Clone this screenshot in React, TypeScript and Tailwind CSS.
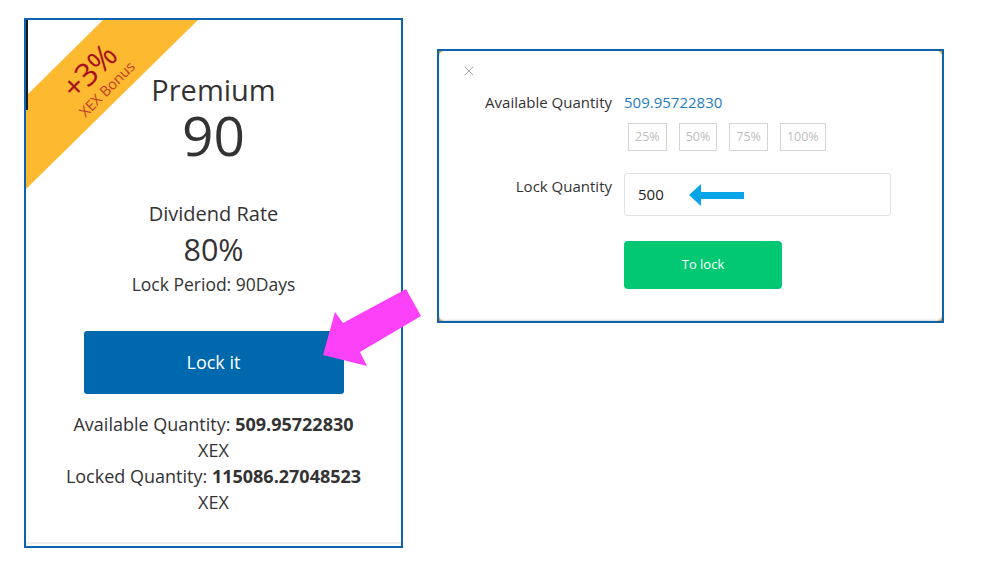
import React from "react";
import { X } from "lucide-react";

function Card() {
  return (
    <div className="relative ml-[24px] mt-[18px] h-[530px] w-[379px] shrink-0 border-2 border-[#0b64ad] bg-white">
      <div className="relative h-full w-full overflow-hidden text-center text-[#333333]">
        {/* ribbon */}
        <svg className="absolute left-0 top-0" width="200" height="200" viewBox="0 0 200 200">
          <polygon points="77,0 172,0 0,169 0,76" fill="#fdb92f" />
        </svg>
        <div className="absolute left-[69px] top-[57px] flex -translate-x-1/2 -translate-y-1/2 -rotate-45 flex-col items-center leading-none">
          <span className="text-[32px] font-medium tracking-[-0.5px] text-[#a8101d]">+3%</span>
          <span className="mt-[3px] text-[14.5px] text-[#c63a2a]">XEX Bonus</span>
        </div>
        <div className="absolute left-0 top-0 h-[90px] w-[2px] bg-[#1a1a1a]" />
        <div className="absolute bottom-[2px] left-0 h-[2px] w-full bg-[#eeeeee]" />

        <div className="relative flex flex-col items-center">
          <div className="mt-[52px] text-[29px] leading-[36px]">Premium</div>
          <div className="mt-[-1px] text-[55px] leading-[56px]">90</div>
          <div className="mt-[39px] text-[20px] leading-[24px]">Dividend Rate</div>
          <div className="mt-[6px] text-[30.5px] leading-[34px]">80%</div>
          <div className="mt-[7px] text-[17.5px] leading-[22px]">Lock Period: 90Days</div>
          <button className="mt-[36px] h-[63px] w-[260px] rounded-[3px] bg-[#0068ad] text-[18px] text-white">
            Lock it
          </button>
          <div className="mt-[17px] text-[18px] leading-[26px]">
            Available Quantity: <span className="font-bold">509.95722830</span>
            <br />
            XEX
            <br />
            Locked Quantity: <span className="font-bold">115086.27048523</span>
            <br />
            XEX
          </div>
        </div>
      </div>
    </div>
  );
}

function Modal() {
  return (
    <div className="ml-[34px] mt-[49px] h-[274px] w-[507px] shrink-0 border-2 border-[#0f63ab] bg-[#c9a14a]">
      <div className="h-full w-full rounded-[5px] bg-white shadow-[inset_0_-1px_2px_rgba(0,0,0,0.15)] text-[15px] text-[#333333]">
        <div className="pl-[22px] pt-[12px]">
          <X size={16} strokeWidth={1.5} className="text-[#aaaaaa]" />
        </div>
        <div className="mt-[13px] flex items-center leading-[20px]">
          <div className="w-[173px] text-right">Available Quantity</div>
          <div className="ml-[12px] text-[#1f7cc1]">509.95722830</div>
        </div>
        <div className="mt-[11px] flex">
          <div className="w-[173px]" />
          <div className="ml-[16px] flex gap-[12px]">
            {["25%", "50%", "75%", "100%"].map((p) => (
              <div
                key={p}
                className="flex h-[28px] items-center border border-[#d4d4d4] px-[6px] text-[12.5px] text-[#bdbdbd]"
              >
                {p}
              </div>
            ))}
          </div>
        </div>
        <div className="mt-[22px] flex">
          <div className="w-[173px] pt-[3px] text-right leading-[20px]">Lock Quantity</div>
          <div className="ml-[12px] flex h-[43px] w-[267px] items-center rounded-[3px] border border-[#e3e3e3] pl-[13px] text-[15px] text-[#222222]">
            <span>500</span>
            <svg className="ml-[25px]" width="56" height="24" viewBox="0 0 56 24">
              <polygon points="0,12 12,1 12,9 55,9 55,16 12,16 12,23" fill="#07a5e7" />
            </svg>
          </div>
        </div>
        <div className="mt-[25px] flex">
          <div className="w-[173px]" />
          <button className="ml-[12px] h-[48px] w-[158px] rounded-[4px] bg-[#03c873] text-[13px] text-white">
            To lock
          </button>
        </div>
      </div>
    </div>
  );
}

export default function App() {
  return (
    <div
      className="relative flex h-[567px] w-[991px] items-start bg-white"
      style={{ fontFamily: "'Open Sans', sans-serif" }}
    >
      <Card />
      <Modal />
      <svg className="pointer-events-none absolute left-0 top-0" width="991" height="567">
        <polygon
          points="323,355 335,312 343,323 406,289 421,316 360,352 367,366"
          fill="#fd41f9"
        />
      </svg>
    </div>
  );
}
